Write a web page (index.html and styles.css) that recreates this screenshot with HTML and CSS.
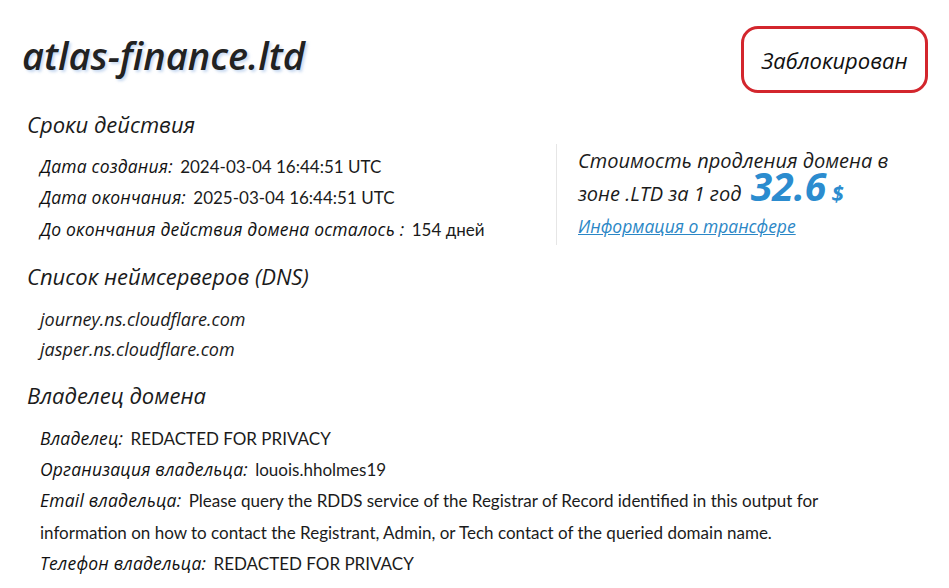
FILE: index.html
```html
<!DOCTYPE html>
<html lang="ru">
<head>
<meta charset="utf-8">
<title>atlas-finance.ltd</title>
<link rel="stylesheet" href="styles.css">
</head>
<body>
<div class="page">
  <header class="top">
    <h1 class="domain">atlas-finance.ltd</h1>
    <div class="badge">Заблокирован</div>
  </header>

  <h2 class="section-title">Сроки действия</h2>
  <div class="terms">
    <div class="terms-list">
      <div class="row"><span class="label">Дата создания:</span> <span class="value">2024-03-04 16:44:51 UTC</span></div>
      <div class="row"><span class="label">Дата окончания:</span> <span class="value">2025-03-04 16:44:51 UTC</span></div>
      <div class="row"><span class="label">До окончания действия домена осталось :</span> <span class="value">154 дней</span></div>
    </div>
    <div class="price">
      <p class="price-text">Стоимость продления домена в зоне .LTD за 1 год <span class="amount">32.6</span> <span class="currency">$</span></p>
      <a class="transfer" href="#">Информация о трансфере</a>
    </div>
  </div>

  <h2 class="section-title">Список неймсерверов (DNS)</h2>
  <div class="ns-list">
    <div class="ns">journey.ns.cloudflare.com</div>
    <div class="ns">jasper.ns.cloudflare.com</div>
  </div>

  <h2 class="section-title">Владелец домена</h2>
  <div class="owner-list">
    <div class="row"><span class="label">Владелец:</span> <span class="value">REDACTED FOR PRIVACY</span></div>
    <div class="row"><span class="label">Организация владельца:</span> <span class="value">louois.hholmes19</span></div>
    <div class="row"><span class="label">Email владельца:</span> <span class="value">Please query the RDDS service of the Registrar of Record identified in this output for information on how to contact the Registrant, Admin, or Tech contact of the queried domain name.</span></div>
    <div class="row"><span class="label">Телефон владельца:</span> <span class="value">REDACTED FOR PRIVACY</span></div>
  </div>
</div>
</body>
</html>
```
FILE: styles.css
```css
* { box-sizing: border-box; }
body {
  margin: 0;
  background: #fff;
  color: #1b1b1b;
  font-family: "Lato", "Noto Sans", sans-serif;
}
.page {
  padding: 24px 21px 0 22px;
  width: 949px;
}
.top {
  display: flex;
  justify-content: space-between;
  align-items: center;
}
.domain {
  margin: 0 0 8px 0;
  font-family: "Open Sans", sans-serif;
  font-size: 38px;
  font-style: italic;
  font-weight: 600;
  color: #222;
  text-shadow: 2px 2px 3px rgba(160, 190, 230, 0.6);
}
.badge {
  width: 187px;
  height: 67px;
  border: 3px solid #d3262d;
  border-radius: 17px;
  display: flex;
  align-items: center;
  justify-content: center;
  font-family: "Open Sans", sans-serif;
  font-size: 22px;
  font-style: italic;
  color: #111;
  margin-top: 2px;
}
.section-title {
  margin: 16px 0 0 5px;
  font-family: "Open Sans", sans-serif;
  font-size: 22px;
  font-weight: 400;
  font-style: italic;
  color: #1b1b1b;
}
.terms {
  display: flex;
  margin-top: 12px;
}
.terms-list {
  width: 534px;
  padding-left: 18px;
}
.row {
  font-size: 17px;
  line-height: 31.25px;
}
.label {
  font-family: "Open Sans", sans-serif;
  font-size: 17.5px;
  font-style: italic;
  color: #111;
  line-height: 1;
  letter-spacing: 0.2px;
}
.value {
  margin-left: 3px;
}
.price {
  border-left: 1px solid #e6e6e6;
  padding-left: 21px;
  width: 365px;
  margin-top: -7px;
}
.price-text {
  margin: 0;
  font-family: "Open Sans", sans-serif;
  font-size: 20px;
  font-style: italic;
  line-height: 33px;
}
.amount {
  font-size: 39px;
  font-weight: 700;
  color: #2b8ccf;
  line-height: 0;
  margin-left: 4px;
}
.currency {
  font-size: 22px;
  font-weight: 700;
  color: #2b8ccf;
  line-height: 0;
}
.transfer {
  display: inline-block;
  font-family: "Open Sans", sans-serif;
  font-size: 17.5px;
  font-style: italic;
  color: #2b87c6;
  text-decoration: underline;
  margin-top: 4px;
}
.ns-list {
  padding-left: 18px;
  margin-top: 13px;
  margin-bottom: 3px;
}
.ns {
  font-family: "Open Sans", sans-serif;
  font-size: 18px;
  font-style: italic;
  line-height: 30px;
}
.owner-list {
  padding-left: 18px;
  margin-top: 13px;
  width: 880px;
}
```
